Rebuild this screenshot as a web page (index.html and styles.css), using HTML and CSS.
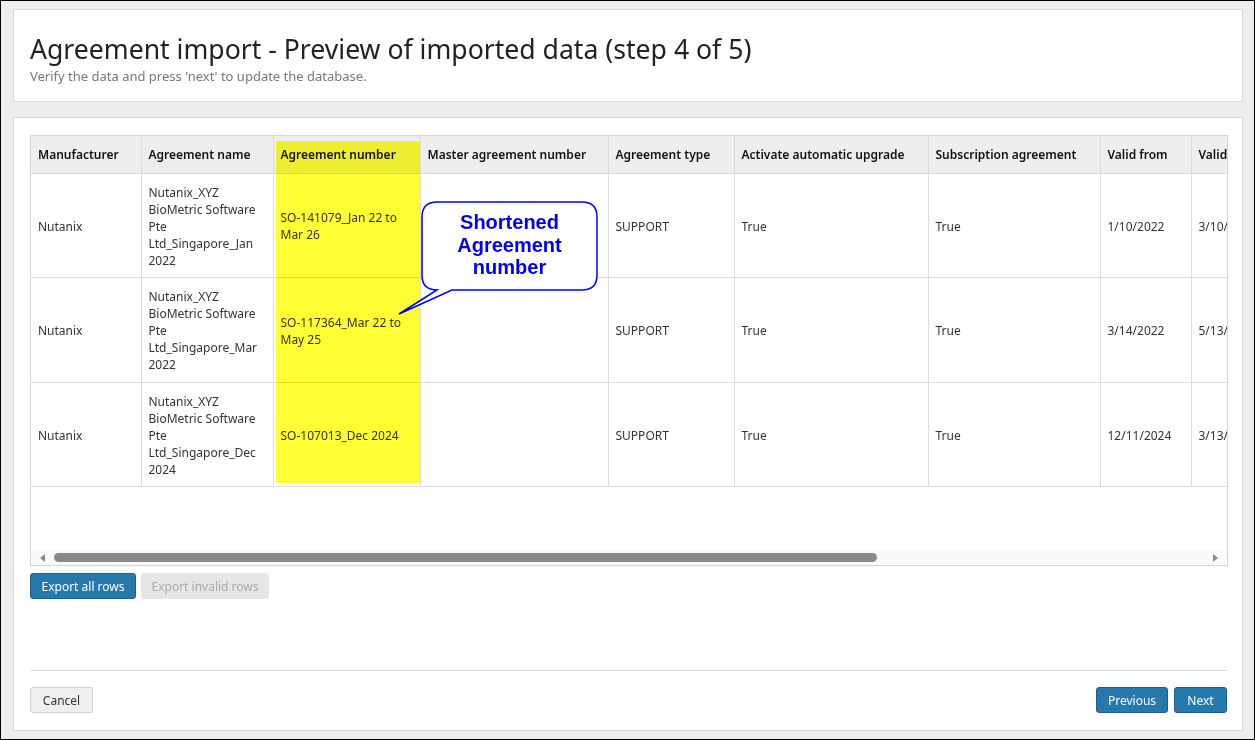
FILE: index.html
```html
<!DOCTYPE html>
<html lang="en">
<head>
    <meta charset="UTF-8">
    <title>Agreement import</title>
    <link rel="stylesheet" href="styles.css">
</head>
<body>
<div class="screen">
    <div class="panel header-panel">
        <h1>Agreement import - Preview of imported data (step 4 of 5)</h1>
        <p class="subtitle">Verify the data and press 'next' to update the database.</p>
    </div>

    <div class="panel main-panel">
        <div class="grid">
            <div class="grid-body">
                <table class="preview">
                    <colgroup>
                        <col style="width:110px">
                        <col style="width:132px">
                        <col style="width:147px">
                        <col style="width:188px">
                        <col style="width:126px">
                        <col style="width:194px">
                        <col style="width:172px">
                        <col style="width:91px">
                        <col style="width:110px">
                    </colgroup>
                    <thead>
                        <tr>
                            <th>Manufacturer</th>
                            <th>Agreement name</th>
                            <th>Agreement number</th>
                            <th>Master agreement number</th>
                            <th>Agreement type</th>
                            <th>Activate automatic upgrade</th>
                            <th>Subscription agreement</th>
                            <th>Valid from</th>
                            <th>Valid to</th>
                        </tr>
                    </thead>
                    <tbody>
                        <tr>
                            <td>Nutanix</td>
                            <td>Nutanix_XYZ BioMetric Software Pte Ltd_Singapore_Jan 2022</td>
                            <td>SO-141079_Jan 22 to Mar 26</td>
                            <td></td>
                            <td>SUPPORT</td>
                            <td>True</td>
                            <td>True</td>
                            <td>1/10/2022</td>
                            <td>3/10/2026</td>
                        </tr>
                        <tr class="mid-row">
                            <td>Nutanix</td>
                            <td>Nutanix_XYZ BioMetric Software Pte Ltd_Singapore_Mar 2022</td>
                            <td>SO-117364_Mar 22 to May 25</td>
                            <td></td>
                            <td>SUPPORT</td>
                            <td>True</td>
                            <td>True</td>
                            <td>3/14/2022</td>
                            <td>5/13/2025</td>
                        </tr>
                        <tr>
                            <td>Nutanix</td>
                            <td>Nutanix_XYZ BioMetric Software Pte Ltd_Singapore_Dec 2024</td>
                            <td>SO-107013_Dec 2024</td>
                            <td></td>
                            <td>SUPPORT</td>
                            <td>True</td>
                            <td>True</td>
                            <td>12/11/2024</td>
                            <td>3/13/2027</td>
                        </tr>
                    </tbody>
                </table>
                <div class="highlight"></div>
            </div>
            <div class="hscroll">
                <span class="arrow arrow-left"></span>
                <div class="track"><div class="thumb"></div></div>
                <span class="arrow arrow-right"></span>
            </div>
        </div>

        <div class="export-actions">
            <button class="btn btn-primary">Export all rows</button>
            <button class="btn btn-disabled" disabled>Export invalid rows</button>
        </div>

        <div class="footer">
            <button class="btn btn-default">Cancel</button>
            <div class="nav-buttons">
                <button class="btn btn-primary">Previous</button>
                <button class="btn btn-primary">Next</button>
            </div>
        </div>

        <!-- annotation callout -->
        <svg class="callout" width="230" height="130" viewBox="0 0 230 130">
            <path d="M57 5 H202 Q217 5 217 20 V78 Q217 93 202 93 H72 L19 117 L57 93 Q42 93 42 78 V20 Q42 5 57 5 Z" fill="#fff" stroke="#0000f0" stroke-width="1.5"/>
            <text x="129.5" y="32" text-anchor="middle">Shortened</text>
            <text x="129.5" y="54.5" text-anchor="middle">Agreement</text>
            <text x="129.5" y="77" text-anchor="middle">number</text>
        </svg>
    </div>
</div>
</body>
</html>
```

FILE: styles.css
```css
* {
    box-sizing: border-box;
}
body {
    margin: 0;
    font-family: "Noto Sans", "Open Sans", sans-serif;
    font-size: 12px;
    color: #333;
}
.screen {
    width: 1255px;
    height: 740px;
    border: 1px solid #000;
    background-color: #eeeeee;
    padding: 8px 12px 0 12px;
}
.panel {
    background-color: #fff;
    border: 1px solid #d9d9d9;
    width: 1230px;
}
.header-panel {
    height: 93px;
    padding: 20px 16px 0 16px;
}
.header-panel h1 {
    margin: 0;
    font-size: 26.6px;
    font-weight: normal;
    color: #222;
    line-height: 38px;
}
.subtitle {
    margin: 0;
    font-size: 13px;
    color: #777;
    line-height: 16px;
}
.main-panel {
    position: relative;
    margin-top: 15px;
    height: 614px;
    padding: 17px 14px 0 16px;
}
.grid {
    border: 1px solid #d6d6d6;
    width: 1198px;
    height: 431px;
    overflow: hidden;
}
.grid-body {
    position: relative;
    height: 414px;
    overflow: hidden;
}
.preview {
    border-collapse: collapse;
    table-layout: fixed;
    width: 1270px;
}
.preview th {
    background-color: #eeeeee;
    font-weight: 600;
    color: #111;
    text-align: left;
    height: 37px;
    padding: 1px 7px 0 7px;
    border-left: 1px solid #dcdcdc;
    border-bottom: 1px solid #dcdcdc;
    white-space: nowrap;
    overflow: hidden;
}
.preview td {
    height: 104px;
    padding: 9px 7px 7px 7px;
    line-height: 17px;
    border-left: 1px solid #dcdcdc;
    border-bottom: 1px solid #dcdcdc;
    vertical-align: middle;
    color: #333;
}
.preview .mid-row td {
    height: 105px;
}
.preview th:first-child,
.preview td:first-child {
    border-left: none;
}
.highlight {
    position: absolute;
    left: 245px;
    top: 5px;
    width: 144px;
    height: 342px;
    background-color: #ffff33;
    mix-blend-mode: multiply;
}
.hscroll {
    height: 15px;
    background-color: #fafafa;
    display: flex;
    align-items: center;
    padding: 0 9px 0 9px;
}
.track {
    flex: 1;
    height: 9px;
    margin: 0 8px 0 9px;
}
.thumb {
    width: 823px;
    height: 9px;
    border-radius: 5px;
    background-color: #8a8a8a;
}
.arrow {
    width: 0;
    height: 0;
    border-top: 4px solid transparent;
    border-bottom: 4px solid transparent;
}
.arrow-left {
    border-right: 5px solid #8a8a8a;
}
.arrow-right {
    border-left: 5px solid #8a8a8a;
}
.btn {
    font-family: "Noto Sans", "Open Sans", sans-serif;
    font-size: 12px;
    height: 26px;
    padding: 0 4px;
    border-radius: 3px;
    border: 1px solid transparent;
    white-space: nowrap;
    cursor: pointer;
}
.btn-primary {
    background-color: #2579ad;
    border-color: #1e5f88;
    color: #fff;
}
.btn-disabled {
    background-color: #e6e6e6;
    border-color: #e6e6e6;
    color: #ababab;
    cursor: default;
}
.btn-default {
    background-color: #efefef;
    border-color: #cfcfcf;
    color: #333;
}
.export-actions {
    display: flex;
    gap: 5px;
    margin-top: 7px;
}
.export-actions .btn-primary {
    width: 106px;
}
.export-actions .btn-disabled {
    width: 128px;
}
.footer {
    margin-top: 71px;
    border-top: 1px solid #d9d9d9;
    padding-top: 16px;
    display: flex;
    justify-content: space-between;
    width: 1197px;
}
.footer .btn-default {
    width: 63px;
}
.nav-buttons {
    display: flex;
    gap: 6px;
}
.nav-buttons .btn:first-child {
    width: 72px;
}
.nav-buttons .btn:last-child {
    width: 53px;
}
.callout {
    position: absolute;
    left: 366px;
    top: 79px;
}
.callout text {
    font-family: "Liberation Sans", Arial, sans-serif;
    font-weight: bold;
    font-size: 20px;
    fill: #0000f0;
}
```
